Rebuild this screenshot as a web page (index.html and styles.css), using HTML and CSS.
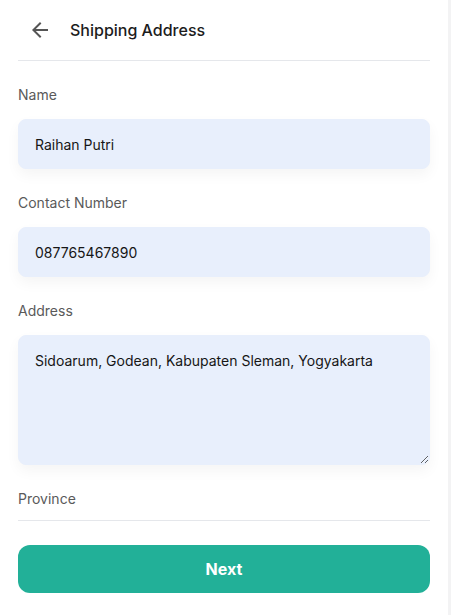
FILE: index.html
```html
<!DOCTYPE html>
<html lang="en">
<head>
<meta charset="utf-8">
<title>Shipping Address</title>
<link rel="stylesheet" href="styles.css">
</head>
<body>
<div class="page">
  <header class="header">
    <svg class="back" viewBox="0 0 24 24" width="24" height="24"><path d="M20 11H7.83l5.59-5.59L12 4l-8 8 8 8 1.41-1.41L7.83 13H20v-2z" fill="#555"/></svg>
    <h1 class="title">Shipping Address</h1>
  </header>
  <form class="form">
    <div class="field">
      <label class="label">Name</label>
      <input class="input" type="text" value="Raihan Putri">
    </div>
    <div class="field">
      <label class="label">Contact Number</label>
      <input class="input" type="text" value="087765467890">
    </div>
    <div class="field">
      <label class="label">Address</label>
      <textarea class="input area">Sidoarum, Godean, Kabupaten Sleman, Yogyakarta</textarea>
    </div>
    <div class="field last">
      <label class="label">Province</label>
      <div class="select"></div>
    </div>
    <button class="next" type="button">Next</button>
  </form>
</div>
</body>
</html>
```
FILE: styles.css
```css
* { box-sizing: border-box; }
html, body { margin: 0; padding: 0; }
body {
  background: #f3f3f4;
  font-family: Inter, "Noto Sans", sans-serif;
}
.page {
  width: 448px;
  min-height: 100vh;
  background: #fff;
  padding: 0 18px;
}
.header {
  height: 61px;
  display: flex;
  align-items: center;
  gap: 18px;
  padding: 0 0 1px 10px;
  border-bottom: 1px solid #e5e7eb;
}
.back { display: block; flex: none; }
.title {
  margin: 0;
  font-size: 16px;
  font-weight: 500;
  color: #1c1c1c;
}
.form {
  display: flex;
  flex-direction: column;
  padding-top: 24px;
}
.field {
  display: flex;
  flex-direction: column;
  margin-bottom: 24px;
}
.label {
  font-size: 14px;
  line-height: 20px;
  color: #5a5a5a;
  margin-bottom: 14px;
}
.input {
  width: 100%;
  height: 50px;
  border: 1px solid #e8effc;
  background: #e8effc;
  border-radius: 8px;
  padding: 0 16px;
  font-family: inherit;
  font-size: 14px;
  color: #161616;
  outline: none;
  box-shadow: 0 6px 14px rgba(0, 0, 0, 0.045);
}
.area {
  height: 130px;
  padding: 15px 16px;
  line-height: 20px;
  resize: vertical;
  display: block;
}
.last .label { margin-bottom: 11px; }
.select {
  height: 0;
  border-bottom: 1px solid #e5e7eb;
}
.next {
  height: 48px;
  border: none;
  border-radius: 12px;
  background: #22b098;
  color: #fff;
  font-family: inherit;
  font-size: 16px;
  font-weight: 700;
}
```
